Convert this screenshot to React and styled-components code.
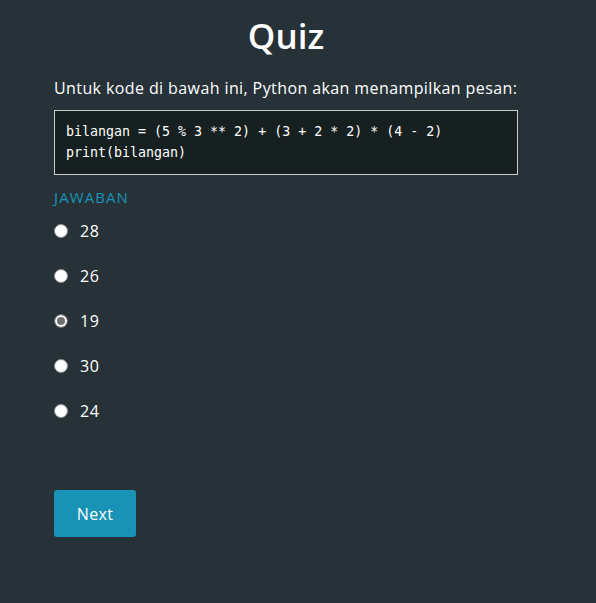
import React, { useState } from 'react';
import styled, { createGlobalStyle } from 'styled-components';

const GlobalStyle = createGlobalStyle`
  html, body {
    margin: 0;
    padding: 0;
    background: #263238;
  }
  body {
    font-family: "Open Sans", "Liberation Sans", sans-serif;
    color: #ffffff;
  }
`;

const Page = styled.div`
  min-height: 603px;
  background: #263238;
  padding: 14px 0 0 54px;
  box-sizing: border-box;
`;

const Quiz = styled.div`
  width: 464px;
`;

const Title = styled.h1`
  margin: 0;
  text-align: center;
  font-size: 35px;
  font-weight: 600;
  line-height: 44px;
`;

const Question = styled.p`
  margin: 18px 0 10px;
  font-size: 16px;
  line-height: 24px;
  letter-spacing: 0.4px;
`;

const Code = styled.pre`
  margin: 0;
  padding: 10px 11px 11px;
  background: #172020;
  border: 1px solid #c9cccc;
  font-family: "DejaVu Sans Mono", "Liberation Mono", monospace;
  font-size: 13.3px;
  line-height: 21px;
  color: #ffffff;
`;

const Label = styled.div`
  margin-top: 13px;
  font-size: 15px;
  line-height: 18px;
  color: #1b93b6;
  text-transform: uppercase;
  letter-spacing: 1.1px;
`;

const Options = styled.div`
  display: flex;
  flex-direction: column;
  gap: 21px;
  margin-top: 13px;
`;

const Option = styled.label`
  display: flex;
  align-items: center;
  gap: 12px;
  height: 24px;
  font-size: 16px;
  letter-spacing: 0.5px;
  cursor: pointer;
`;

const Radio = styled.input.attrs({ type: 'radio' })`
  appearance: none;
  margin: 0;
  width: 14px;
  height: 14px;
  border-radius: 50%;
  border: 1px solid #8a8f92;
  background: #ffffff;
  box-sizing: border-box;
  cursor: pointer;

  &:checked {
    background: #707070;
    box-shadow: inset 0 0 0 2px #ffffff;
    border-color: #707070;
  }
`;

const Button = styled.button`
  margin-top: 67px;
  width: 82px;
  height: 47px;
  border: none;
  border-radius: 3px;
  background: #1893b5;
  color: #ffffff;
  font-family: inherit;
  font-size: 16px;
  letter-spacing: 0.3px;
  cursor: pointer;
`;

const answers = ['28', '26', '19', '30', '24'];

export default function App() {
  const [picked, setPicked] = useState('19');

  return (
    <>
      <GlobalStyle />
      <Page>
        <Quiz>
          <Title>Quiz</Title>
          <Question>Untuk kode di bawah ini, Python akan menampilkan pesan:</Question>
          <Code>{`bilangan = (5 % 3 ** 2) + (3 + 2 * 2) * (4 - 2)
print(bilangan)`}</Code>
          <Label>Jawaban</Label>
          <Options>
            {answers.map((a) => (
              <Option key={a}>
                <Radio
                  name="jawaban"
                  value={a}
                  checked={picked === a}
                  onChange={() => setPicked(a)}
                />
                {a}
              </Option>
            ))}
          </Options>
          <Button>Next</Button>
        </Quiz>
      </Page>
    </>
  );
}
